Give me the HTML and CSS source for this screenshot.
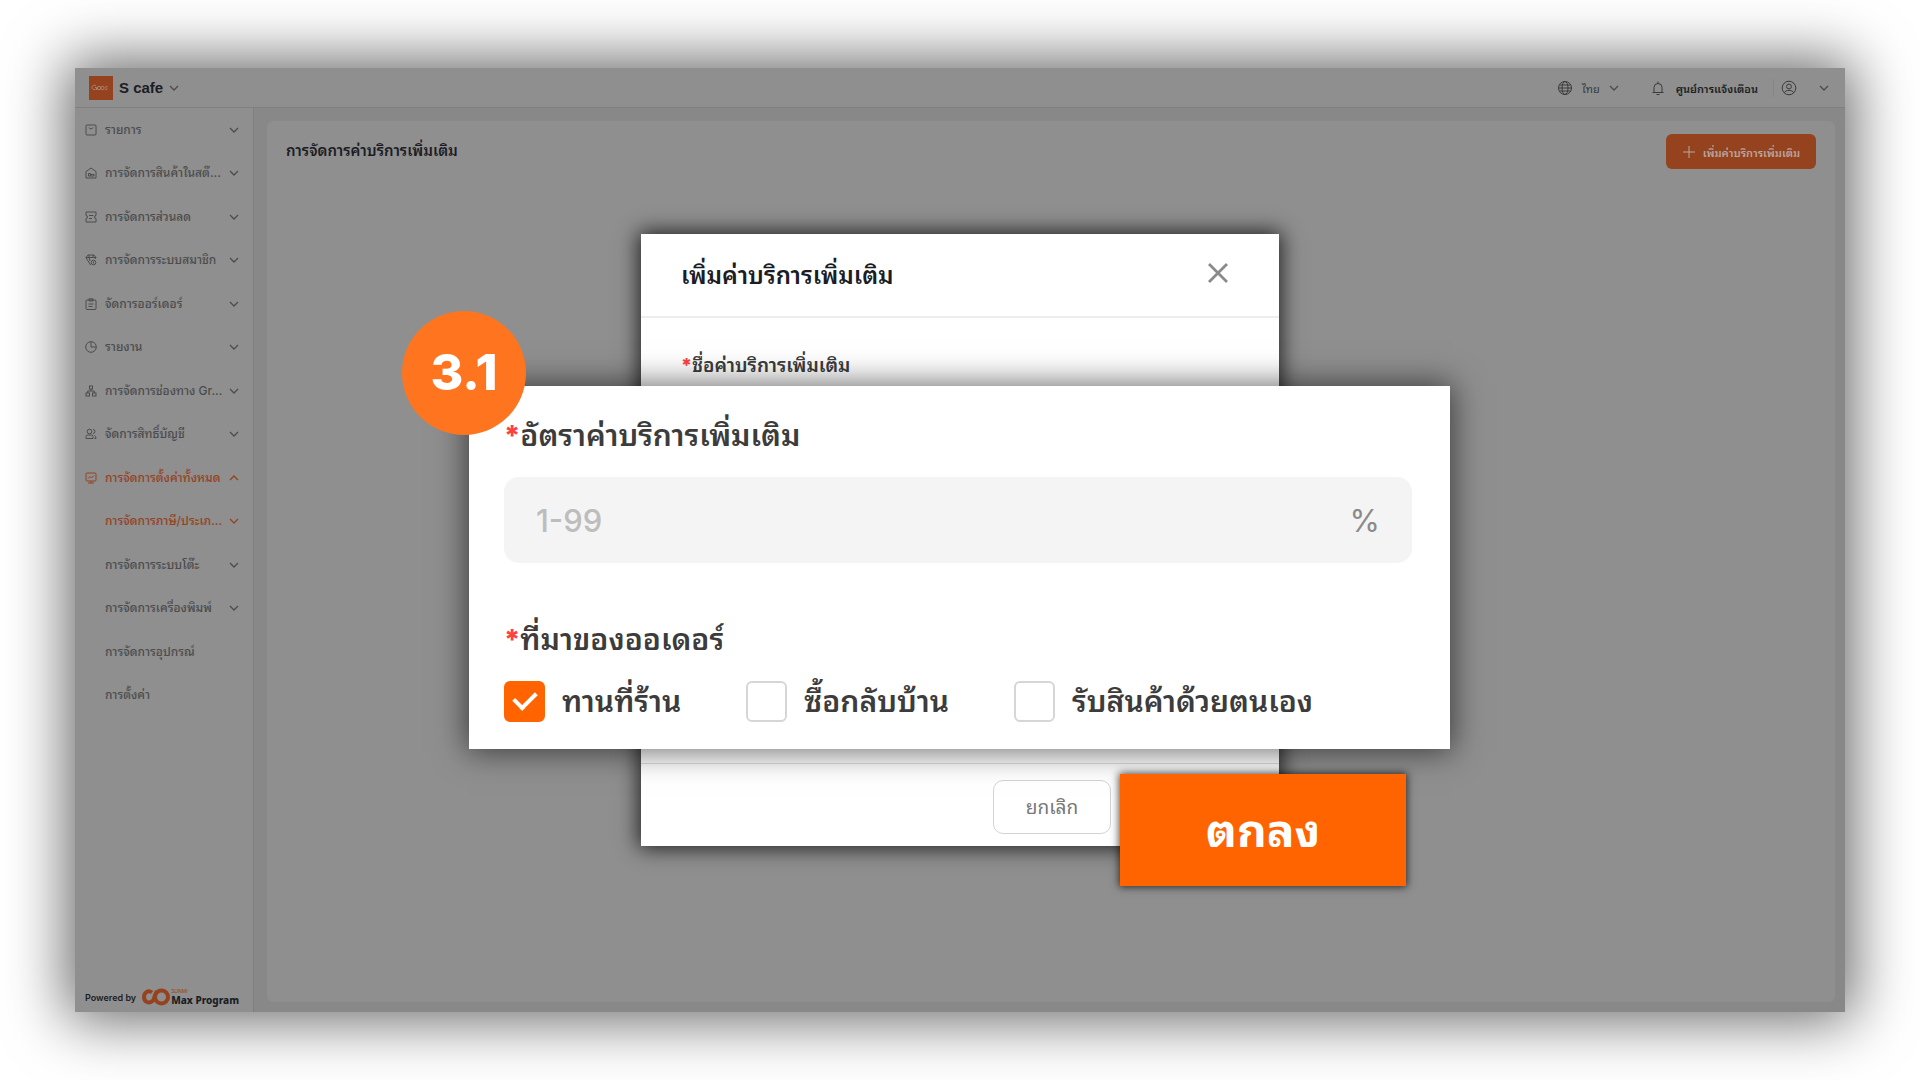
FILE: index.html
```html
<!DOCTYPE html>
<html lang="th">
<head>
<meta charset="utf-8">
<title>S cafe</title>
<link rel="stylesheet" href="styles.css">
</head>
<body>
<svg class="sprite" aria-hidden="true">
  <symbol id="chev" viewBox="0 0 10 10"><path d="M1 3l4 4 4-4"/></symbol>
  <symbol id="chev-up" viewBox="0 0 10 10"><path d="M1 7l4-4 4 4"/></symbol>
</svg>
<div class="app">
  <header class="topbar">
    <a class="brand" href="#">
      <svg class="logo" viewBox="0 0 24 24" aria-hidden="true"><rect width="24" height="24" fill="#95421f"/><g fill="none" stroke="#a98470" stroke-width="1"><path d="M7 9.500C4.500 8.500 3 10 3 11.500s1.500 2.500 3.500 2M6 11.500h1.500v2.500"/><circle cx="10" cy="12" r="1.700"/><circle cx="13.500" cy="12" r="1.700"/><path d="M18.500 10.500c-2-.8-2.500 1-1.200 1.500s.8 2.500-1.300 1.500"/></g></svg>
      <span>S cafe</span>
      <svg class="chev"><use href="#chev"/></svg>
    </a>
    <div class="tools">
      <button class="tool lang" type="button">
        <svg class="ico" viewBox="0 0 16 16"><circle cx="8" cy="8" r="6.500"/><ellipse cx="8" cy="8" rx="3" ry="6.500"/><path d="M1.500 8h13M2.500 5h11M2.500 11h11"/></svg>
        <span>ไทย</span>
        <svg class="chev"><use href="#chev"/></svg>
      </button>
      <button class="tool bell" type="button">
        <svg class="ico" viewBox="0 0 16 16"><path d="M2.500 12.500h11M4 12.500V7.500a4 4 0 0 1 8 0v5M8 3.500V1.500M6.500 14.500h3"/></svg>
        <span>ศูนย์การแจ้งเตือน</span>
      </button>
      <button class="tool user" type="button" aria-label="บัญชี">
        <svg class="ico" viewBox="0 0 16 16"><circle cx="8" cy="8" r="6.800"/><circle cx="8" cy="6.500" r="2.400"/><path d="M3.500 12.500c1-2.800 8-2.800 9 0"/></svg>
        <svg class="chev"><use href="#chev"/></svg>
      </button>
    </div>
  </header>
  <div class="body">
    <aside class="side">
      <nav class="menu">
        <a href="#"><svg class="ico" viewBox="0 0 12 12"><rect x="1" y="1" width="10" height="10" rx="1"/><path d="M4 3.500c.5 1.800 3.500 1.800 4 0"/></svg><span>รายการ</span><svg class="chev"><use href="#chev"/></svg></a>
        <a href="#"><svg class="ico" viewBox="0 0 12 12"><path d="M1 11V4.500L6 1l5 3.500V11zM3.500 9V6.500h2V9h3.500V7.500H6M3.500 9h2"/></svg><span>การจัดการสินค้าในสต๊...</span><svg class="chev"><use href="#chev"/></svg></a>
        <a href="#"><svg class="ico" viewBox="0 0 12 12"><path d="M1 1h10v3.500a1.500 1.500 0 0 0 0 3V11H1V7.500a1.500 1.500 0 0 0 0-3zM4 4.500h4.500M4 7.500h3"/></svg><span>การจัดการส่วนลด</span><svg class="chev"><use href="#chev"/></svg></a>
        <a href="#"><svg class="ico" viewBox="0 0 12 12"><path d="M3 1h6l2 2.500-1 1.500M3 1L1 3.500 5.500 11M1 3.500h10M4 3.500L5 7M4 1v2.500M8 1v2.500"/><circle cx="8.500" cy="8.500" r="2.300"/><path d="M8.500 7.500v2"/></svg><span>การจัดการระบบสมาชิก</span><svg class="chev"><use href="#chev"/></svg></a>
        <a href="#"><svg class="ico" viewBox="0 0 12 12"><rect x="1" y="2" width="10" height="9.500" rx="1"/><path d="M4 2V.8h4V3H4V2M3.500 6h5M3.500 8.500h4"/></svg><span>จัดการออร์เดอร์</span><svg class="chev"><use href="#chev"/></svg></a>
        <a href="#"><svg class="ico" viewBox="0 0 12 12"><circle cx="6" cy="6" r="5.300"/><path d="M6 1v5h5"/></svg><span>รายงาน</span><svg class="chev"><use href="#chev"/></svg></a>
        <a href="#"><svg class="ico" viewBox="0 0 12 12"><rect x="4.500" y="1" width="3" height="3"/><rect x="1" y="8" width="3.500" height="3"/><rect x="7.500" y="8" width="3.500" height="3"/><path d="M6 4v2M2.700 8V6h6.600v2"/></svg><span>การจัดการช่องทาง Gr...</span><svg class="chev"><use href="#chev"/></svg></a>
        <a href="#"><svg class="ico" viewBox="0 0 12 12"><circle cx="4.500" cy="3.500" r="2.300"/><path d="M1 10.500V8.500q0-1.500 1.500-1.500h4Q8 7 8 8.500v2zM8 1.500a2 2 0 0 1 0 4M9.500 7.500q1.500.5 1.500 3H9.500"/></svg><span>จัดการสิทธิ์บัญชี</span><svg class="chev"><use href="#chev"/></svg></a>
        <a href="#" class="on"><svg class="ico" viewBox="0 0 12 12"><rect x="1" y="1" width="10" height="8" rx="1"/><path d="M3 6.500l2-2 1.500 1.500L9 3.500M6 9v2M3 11h6"/></svg><span>การจัดการตั้งค่าทั้งหมด</span><svg class="chev"><use href="#chev-up"/></svg></a>
        <a href="#" class="sub on"><span>การจัดการภาษี/ประเภ...</span><svg class="chev"><use href="#chev"/></svg></a>
        <a href="#" class="sub"><span>การจัดการระบบโต๊ะ</span><svg class="chev"><use href="#chev"/></svg></a>
        <a href="#" class="sub"><span>การจัดการเครื่องพิมพ์</span><svg class="chev"><use href="#chev"/></svg></a>
        <a href="#" class="sub"><span>การจัดการอุปกรณ์</span></a>
        <a href="#" class="sub"><span>การตั้งค่า</span></a>
      </nav>
      <div class="powered">
        <span class="by">Powered by</span>
        <svg class="mark" viewBox="0 0 28 18" aria-hidden="true"><g fill="none" stroke="#95421f" stroke-width="4"><path d="M10 4.500C6 1.500 2 5 2 9c0 5 5 7 8.500 4C13 11 12 6 15 3.500"/><circle cx="19.500" cy="9" r="6.500"/></g></svg>
        <span class="maker"><small>SUNMI</small><b>Max Program</b></span>
      </div>
    </aside>
    <main class="main">
      <section class="card">
        <h1>การจัดการค่าบริการเพิ่มเติม</h1>
        <button class="add" type="button"><svg viewBox="0 0 14 14"><path d="M7 1v12M1 7h12"/></svg><span>เพิ่มค่าบริการเพิ่มเติม</span></button>
      </section>
    </main>
  </div>

  <div class="dialog" role="dialog" aria-labelledby="dlg-title">
    <div class="dlg-head">
      <h2 id="dlg-title">เพิ่มค่าบริการเพิ่มเติม</h2>
      <button class="close" type="button" aria-label="ปิด"><svg viewBox="0 0 20 20"><path d="M1 1l18 18M19 1L1 19"/></svg></button>
    </div>
    <div class="dlg-body"><p class="label"><i>*</i>ชื่อค่าบริการเพิ่มเติม</p></div>
    <div class="dlg-foot"><button class="cancel" type="button">ยกเลิก</button></div>
  </div>

  <form class="panel">
    <label class="title" for="rate"><i>*</i>อัตราค่าบริการเพิ่มเติม</label>
    <div class="field"><input id="rate" type="text" placeholder="1-99"><span>%</span></div>
    <fieldset>
      <legend class="title"><i>*</i>ที่มาของออเดอร์</legend>
      <div class="checks">
        <label><input type="checkbox" checked>ทานที่ร้าน</label>
        <label><input type="checkbox">ซื้อกลับบ้าน</label>
        <label><input type="checkbox">รับสินค้าด้วยตนเอง</label>
      </div>
    </fieldset>
  </form>
  <button class="ok" type="button">ตกลง</button>
  <div class="step">3.1</div>
</div>
</body>
</html>
```
FILE: styles.css
```css
* { box-sizing: border-box; }
body {
  margin: 0;
  min-height: 100vh;
  padding: 68px 75px;
  display: flex;
  background: #fff;
  color: #1c1d24;
  font-family: Inter, "Noto Sans Thai Looped", "Noto Looped Thai", Loma, Garuda, Waree, "Noto Sans Thai", "Noto Sans", sans-serif;
}
button, input { font: inherit; color: inherit; }
button { border: 0; background: none; padding: 0; }
a { color: inherit; text-decoration: none; }
h1, h2, p { margin: 0; }
i { color: #ff4040; font-style: normal; font-weight: 800; }
svg { flex: none; }
.sprite { position: absolute; width: 0; height: 0; }

.app {
  position: relative;
  flex: 1;
  display: flex;
  flex-direction: column;
  background: #888;
  box-shadow: 0 0 56px 8px rgba(0, 0, 0, .6);
}
.chev, .ico, .add svg, .close svg { fill: none; stroke: currentColor; }
.chev { width: 10px; height: 10px; stroke-width: 1.3; color: #4c4c4c; }

.topbar {
  height: 40px;
  padding: 0 16px 0 14px;
  display: flex;
  align-items: center;
  justify-content: space-between;
  background: #8f8f8f;
  border-bottom: 1px solid #7f7f7f;
}
.brand { display: flex; align-items: center; gap: 6px; font-size: 15px; font-family: "Liberation Sans", sans-serif; font-weight: 700; }
.logo { width: 24px; height: 24px; }
.tools, .tool { display: flex; align-items: center; }
.tool { font-size: 11px; color: #3a3a3a; }
.tool .ico { width: 16px; height: 16px; }
.lang { gap: 9px; margin-right: 31px; }
.bell { gap: 10px; font-weight: 600; color: #1c1d24; padding-right: 15px; border-right: 1px solid #868686; }
.bell .ico { color: #3a3a3a; }
.user { gap: 22px; padding-left: 7px; }

.body { flex: 1; display: flex; }
.side {
  width: 179px;
  display: flex;
  flex-direction: column;
  justify-content: space-between;
  background: #8f8f8f;
  border-right: 1px solid #7f7f7f;
}
.menu {
  height: 609px;
  display: grid;
  grid-template-columns: minmax(0, 1fr);
  grid-auto-rows: 1fr;
}
.menu a {
  display: flex;
  align-items: center;
  gap: 4px;
  padding: 0 14px 0 10px;
  font-size: 12px;
  font-weight: 500;
  color: #4c4c4c;
}
.menu .sub { padding-left: 30px; }
.menu span { flex: 1; white-space: nowrap; line-height: 24px; }
.menu .ico { width: 12px; height: 12px; margin-right: 4px; }
.menu .on, .menu .on .chev { color: #95421f; }
.powered { display: flex; align-items: center; gap: 6px; padding: 0 0 6px 10px; white-space: nowrap; }
.by { font-size: 9px; font-weight: 600; }
.mark { width: 28px; height: 18px; }
.maker { display: flex; flex-direction: column; margin-left: -5px; }
.maker small { font-size: 5px; line-height: 6px; color: #95421f; }
.maker b { font: 800 10px/12px "Noto Sans", sans-serif; }

.main { flex: 1; padding: 13px 10px 10px 13px; display: flex; background: #888; }
.card {
  flex: 1;
  display: flex;
  justify-content: space-between;
  align-items: flex-start;
  padding: 13px 19px;
  background: #8f8f8f;
  border-radius: 6px;
}
.card h1 { font-size: 15px; font-weight: 600; line-height: 34px; }
.add {
  height: 35px;
  width: 150px;
  display: flex;
  align-items: center;
  justify-content: center;
  gap: 7px;
  border-radius: 6px;
  background: #95421f;
  color: #b9a69c;
  font-size: 11px;
  font-weight: 600;
  white-space: nowrap;
}
.add svg { width: 14px; height: 14px; }

.dialog {
  position: absolute;
  left: 566px;
  top: 166px;
  width: 638px;
  height: 612px;
  display: flex;
  flex-direction: column;
  background: #fff;
  box-shadow: 0 0 20px 2px rgba(0, 0, 0, .8);
}
.dlg-head {
  height: 84px;
  padding: 0 51px 4px 40px;
  display: flex;
  align-items: center;
  justify-content: space-between;
  border-bottom: 2px solid #ededed;
}
.dlg-head h2 { font-size: 24px; font-weight: 600; }
.close { color: #8a8a8a; display: flex; }
.close svg { width: 20px; height: 20px; stroke-width: 2.8; }
.dlg-body { flex: 1; padding: 33px 40px; }
.label { font-size: 19px; font-weight: 600; line-height: 30px; color: #3c3c3c; }
.dlg-foot { height: 83px; padding: 16px 168px; display: flex; justify-content: flex-end; border-top: 1px solid #ddd; }
.cancel { width: 118px; height: 54px; padding-bottom: 4px; border: 1px solid #d4d4d4; border-radius: 10px; font-size: 19px; color: #777; }

.panel {
  position: absolute;
  left: 394px;
  top: 318px;
  width: 981px;
  height: 363px;
  padding: 24px 38px 0 35px;
  background: #fff;
  color: #3c3c3c;
  box-shadow: 0 0 30px 2px rgba(0, 0, 0, .6);
}
.title { display: block; padding: 0; font-size: 30px; font-weight: 600; line-height: 50px; }
.title i { font-size: 28px; }
.field {
  height: 86px;
  margin: 16px 0 51px;
  padding: 0 32px;
  display: flex;
  align-items: center;
  border-radius: 15px;
  background: #f4f4f4;
  font-size: 31px;
  color: #8a8a8a;
}
.field input { flex: 1; min-width: 0; border: 0; padding: 0; background: none; outline: 0; font-weight: 500; }
.field input::placeholder { color: #bdbdbd; opacity: 1; }
fieldset { border: 0; margin: 0; padding: 0; }
.checks { display: flex; gap: 65px; padding-top: 15px; }
.checks label { display: flex; align-items: center; gap: 17px; font-size: 30px; font-weight: 600; line-height: 42px; }
.checks input {
  appearance: none;
  width: 41px;
  height: 41px;
  margin: 0;
  border: 2px solid #d6d6d6;
  border-radius: 6px;
  background: #fff;
}
.checks input:checked {
  border-color: #ff6400;
  background: #ff6400;
  display: grid;
  place-items: center;
}
.checks input:checked::before {
  content: "";
  width: 10px;
  height: 18px;
  margin-bottom: 6px;
  border: solid #fff;
  border-width: 0 4px 4px 0;
  rotate: 45deg;
}
.ok {
  position: absolute;
  left: 1045px;
  top: 706px;
  width: 286px;
  height: 112px;
  padding-bottom: 8px;
  background: #ff6400;
  color: #fff;
  font-size: 46px;
  font-weight: 700;
  box-shadow: 0 0 8px 1px rgba(0, 0, 0, .7);
}
.step {
  position: absolute;
  left: 327px;
  top: 243px;
  width: 124px;
  height: 124px;
  border-radius: 50%;
  background: #ff751f;
  color: #fff;
  font: 800 50px/122px Inter, sans-serif;
  text-align: center;
}
```
